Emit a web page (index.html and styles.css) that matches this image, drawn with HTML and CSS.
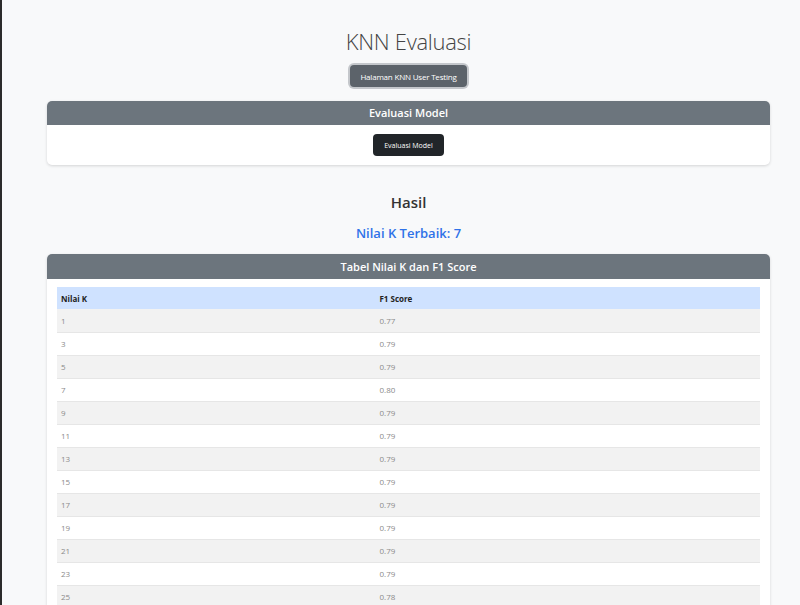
FILE: index.html
```html
<!DOCTYPE html>
<html>
<head>
<meta charset="utf-8">
<link rel="stylesheet" href="styles.css">
</head>
<body>
<div class="page">
  <h1 class="title">KNN Evaluasi</h1>
  <div class="center"><button class="btn btn-secondary">Halaman KNN User Testing</button></div>
  <div class="card card-eval">
    <div class="card-header">Evaluasi Model</div>
    <div class="card-body center"><button class="btn btn-dark">Evaluasi Model</button></div>
  </div>
  <h2 class="hasil">Hasil</h2>
  <h3 class="best">Nilai K Terbaik: 7</h3>
  <div class="card card-table">
    <div class="card-header">Tabel Nilai K dan F1 Score</div>
    <div class="card-body table-body">
      <table class="tbl">
        <thead><tr><th class="c1">Nilai K</th><th>F1 Score</th></tr></thead>
        <tbody>
          <tr><td>1</td><td>0.77</td></tr>
          <tr><td>3</td><td>0.79</td></tr>
          <tr><td>5</td><td>0.79</td></tr>
          <tr><td>7</td><td>0.80</td></tr>
          <tr><td>9</td><td>0.79</td></tr>
          <tr><td>11</td><td>0.79</td></tr>
          <tr><td>13</td><td>0.79</td></tr>
          <tr><td>15</td><td>0.79</td></tr>
          <tr><td>17</td><td>0.79</td></tr>
          <tr><td>19</td><td>0.79</td></tr>
          <tr><td>21</td><td>0.79</td></tr>
          <tr><td>23</td><td>0.79</td></tr>
          <tr><td>25</td><td>0.78</td></tr>
        </tbody>
      </table>
    </div>
  </div>
</div>
</body>
</html>
```
FILE: styles.css
```css
html, body {
  margin: 0;
  padding: 0;
  height: 100%;
  overflow: hidden;
}
body {
  background: #f8f9fa;
  border-left: 2px solid #2b2b2b;
  font-family: "Open Sans", "Noto Sans", sans-serif;
  color: #333;
}
.page {
  padding: 28px 30px 0 45px;
}
.center {
  display: flex;
  justify-content: center;
  align-items: center;
}
.title {
  margin: 0 0 11px;
  text-align: center;
  font-size: 22px;
  line-height: 26px;
  font-weight: 300;
  color: #444;
  letter-spacing: -0.3px;
}
.btn {
  font-family: "Open Sans", sans-serif;
  border: none;
  border-radius: 4px;
  color: #fff;
  cursor: pointer;
}
.btn-secondary {
  background: #5c636a;
  height: 22px;
  padding: 0 10px;
  font-size: 8px;
  box-shadow: 0 0 0 2px #c4c7cb;
  letter-spacing: -0.2px;
}
.btn-dark {
  background: #212529;
  height: 22px;
  width: 71px;
  padding: 0;
  font-size: 7px;
}
.card {
  background: #fff;
  border-radius: 5px;
  box-shadow: 0 1px 3px rgba(0,0,0,0.15);
  overflow: hidden;
}
.card-eval {
  margin-top: 14px;
}
.card-header {
  background: #6c757d;
  color: #fff;
  text-align: center;
  font-weight: 600;
  font-size: 11px;
  height: 24px;
  line-height: 24px;
}
.card-eval .card-body {
  padding: 9px 0;
  height: 22px;
}
.hasil {
  margin: 27px 0 0;
  text-align: center;
  font-size: 15px;
  line-height: 20px;
  font-weight: 600;
  color: #333;
}
.best {
  margin: 11px 0 0;
  text-align: center;
  font-size: 13px;
  line-height: 20px;
  font-weight: 600;
  color: #2f72e8;
}
.card-table {
  margin-top: 11px;
}
.card-table .card-header {
  height: 25px;
  line-height: 25px;
}
.table-body {
  padding: 8px 10px 0;
}
.tbl {
  width: 100%;
  border-collapse: collapse;
  font-size: 8px;
}
.tbl th {
  background: #cfe2ff;
  color: #222;
  text-align: left;
  font-weight: 700;
  height: 22px;
  padding: 0 4px;
}
.tbl th.c1 {
  width: 45.3%;
}
.tbl td {
  height: 23px;
  padding: 0 4px;
  color: #8a8a8a;
  border-bottom: 1px solid #e6e6e6;
  box-sizing: border-box;
}
.tbl tbody tr:nth-child(odd) td {
  background: #f2f2f2;
}
```
